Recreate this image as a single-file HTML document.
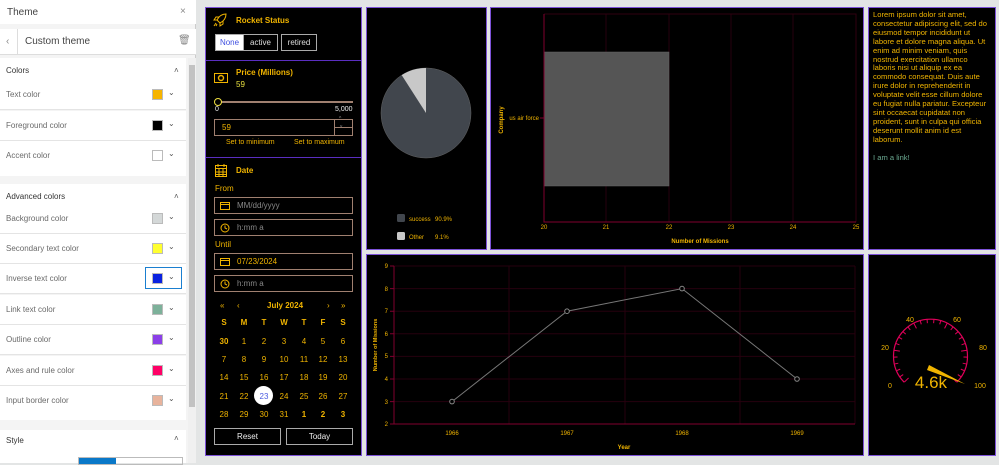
<!DOCTYPE html>
<html><head><style>
*{box-sizing:border-box;margin:0;padding:0}
body{width:999px;height:463px;overflow:hidden;background:#e3e5e5;font-family:"Liberation Sans",sans-serif;position:relative}
.a{position:absolute}
.side{left:0;top:0;width:196px;height:463px;background:#f4f4f4;border-right:1px solid #ccc}
.row{position:absolute;left:0;width:186px;height:30px;background:#fff;font-size:8px;color:#6a6a6a}
.row span{position:absolute;left:6px;top:10px}
.row i{position:absolute;left:152px;top:9px;width:11px;height:11px;border:1px solid #bbb}
.row b{position:absolute;left:168px;top:8px;font-weight:normal;font-size:8px;color:#555}
.row.l{border-bottom:1px solid #e4e4e4}
.p{position:absolute;background:#000;border:1px solid #7d52d8}
.t{font-size:8px;color:#f0b400;position:absolute}
.inp{position:absolute;left:214px;width:139px;height:17px;border:1px solid #a08070;font-size:8px;color:#888}
.cal{position:absolute;font-size:8px;color:#f0b400;width:14px;text-align:center}
</style></head><body>
<div class="a side">
 <div class="a" style="left:0;top:0;width:196px;height:24px;background:#fff;font-size:10px;color:#444"><span class="a" style="left:7px;top:7px">Theme</span><span class="a" style="left:180px;top:6px;color:#888">×</span></div>
 <div class="a" style="left:0;top:29px;width:196px;height:26px;background:#fff;font-size:10px;color:#444;border-bottom:1px solid #ddd"><span class="a" style="left:6px;top:7px;color:#888">‹</span><div class="a" style="left:17px;top:0;width:1px;height:26px;background:#ddd"></div><span class="a" style="left:25px;top:7px">Custom theme</span><span class="a" style="left:178px;top:6px;color:#888">🗑</span></div>
 <div class="a" style="left:188px;top:58px;width:8px;height:405px;background:#f0f0f0"></div>
 <div class="a" style="left:189px;top:65px;width:6px;height:342px;background:#c2c2c2"></div>
 <div class="row" style="top:58px;height:24px"><span style="top:8px;color:#333">Colors</span><b style="left:174px">˄</b></div>
 <div class="row l" style="top:80px"><span>Text color</span><i style="background:#f6b400"></i><b>⌄</b></div>
 <div class="row l" style="top:111px"><span>Foreground color</span><i style="background:#000"></i><b>⌄</b></div>
 <div class="row" style="top:141px;height:35px"><span>Accent color</span><i style="background:#fff"></i><b>⌄</b></div>
 <div class="row" style="top:184px;height:22px"><span style="top:8px;color:#333">Advanced colors</span><b style="left:174px">˄</b></div>
 <div class="row l" style="top:204px"><span>Background color</span><i style="background:#d4d8d8"></i><b>⌄</b></div>
 <div class="row l" style="top:234px"><span>Secondary text color</span><i style="background:#ffff30"></i><b>⌄</b></div>
 <div class="row l" style="top:264px"><span>Inverse text color</span><div class="a" style="left:145px;top:3px;width:37px;height:22px;border:1px solid #1a7fd0"></div><i style="background:#0a22e0"></i><b>⌄</b></div>
 <div class="row l" style="top:295px"><span>Link text color</span><i style="background:#7db19a"></i><b>⌄</b></div>
 <div class="row l" style="top:325px"><span>Outline color</span><i style="background:#8b3fe8"></i><b>⌄</b></div>
 <div class="row l" style="top:356px"><span>Axes and rule color</span><i style="background:#ff0066"></i><b>⌄</b></div>
 <div class="row" style="top:386px;height:34px"><span>Input border color</span><i style="background:#e8b39c"></i><b>⌄</b></div>
 <div class="row" style="top:430px;height:33px"><span style="top:6px;color:#333">Style</span><b style="left:174px;top:4px">˄</b>
  <div class="a" style="left:78px;top:27px;width:105px;height:8px;border:1px solid #bbb"></div><div class="a" style="left:79px;top:28px;width:37px;height:6px;background:#0a78c8"></div></div>
</div>

<div class="p" style="left:205px;top:7px;width:157px;height:449px"></div>
<svg class="a" style="left:213px;top:13px" width="14" height="14" viewBox="0 0 14 14" fill="none" stroke="#f0b400" stroke-width="1"><path d="M13 1C9 1 6 3 4 7l3 3c4-2 6-5 6-9zM4 7L1 7l2-3h3M7 10v3l3-2V8M3 10l-2 3M4 11l-1 2"/></svg>
<div class="t" style="left:236px;top:16px;font-weight:bold">Rocket Status</div>
<div class="a" style="left:215px;top:34px;width:29px;height:17px;background:#fff;border:1px solid #aaa;font-size:8px;color:#4050e0;text-align:center;line-height:15px">None</div>
<div class="a" style="left:243px;top:34px;width:35px;height:17px;border:1px solid #aaa;font-size:8px;color:#ddd;text-align:center;line-height:15px">active</div>
<div class="a" style="left:281px;top:34px;width:36px;height:17px;border:1px solid #aaa;font-size:8px;color:#ddd;text-align:center;line-height:15px">retired</div>
<div class="a" style="left:206px;top:60px;width:155px;height:1px;background:#5a2ec0"></div>
<svg class="a" style="left:214px;top:73px" width="14" height="10"><rect x="0.5" y="0.5" width="13" height="9" fill="none" stroke="#f0b400"/><circle cx="7" cy="5" r="2.5" fill="none" stroke="#f0b400" stroke-width="1.4"/></svg>
<div class="t" style="left:236px;top:68px;font-weight:bold">Price (Millions)</div>
<div class="t" style="left:236px;top:80px;color:#e8e040">59</div>
<div class="a" style="left:218px;top:101px;width:135px;height:2px;background:#a08070"></div>
<div class="a" style="left:214px;top:98px;width:8px;height:8px;border-radius:50%;border:1.5px solid #f0e040;background:#000"></div>
<div class="t" style="left:215px;top:106px;font-size:7px;color:#eee">0</div>
<div class="t" style="left:335px;top:106px;font-size:7px;color:#eee">5,000</div>
<div class="a" style="left:214px;top:119px;width:139px;height:17px;border:1px solid #a08070"></div>
<div class="a" style="left:334px;top:119px;width:1px;height:17px;background:#a08070"></div>
<div class="a" style="left:334px;top:127px;width:19px;height:1px;background:#a08070"></div>
<div class="t" style="left:222px;top:123px;font-size:8px">59</div>
<div class="t" style="left:339px;top:117px;font-size:7px;color:#ccc">ˆ</div><div class="t" style="left:340px;top:126px;font-size:7px;color:#ccc">ˇ</div>
<div class="t" style="left:226px;top:139px;font-size:7px">Set to minimum</div>
<div class="t" style="left:294px;top:139px;font-size:7px">Set to maximum</div>
<div class="a" style="left:206px;top:157px;width:155px;height:1px;background:#5a2ec0"></div>
<svg class="a" style="left:215px;top:164px" width="12" height="13" fill="none" stroke="#f0b400"><rect x="0.5" y="1.5" width="11" height="11"/><path d="M0 4.5h12M3 0v3M9 0v3M4 4v9M8 4v9M0 8h12M0 10.5h12"/></svg>
<div class="t" style="left:236px;top:166px;font-weight:bold">Date</div>
<div class="t" style="left:215px;top:184px">From</div>
<div class="inp" style="top:197px"><svg class="a" style="left:5px;top:4px" width="10" height="8" fill="none" stroke="#f0b400"><rect x=".5" y=".5" width="9" height="7"/><path d="M0 2.5h10"/></svg><span class="a" style="left:22px;top:3px">MM/dd/yyyy</span></div>
<div class="inp" style="top:219px"><svg class="a" style="left:5px;top:3px" width="10" height="10" fill="none" stroke="#f0b400"><circle cx="5" cy="5" r="4"/><path d="M5 2.5V5l2 1"/></svg><span class="a" style="left:22px;top:3px">h:mm a</span></div>
<div class="t" style="left:215px;top:240px">Until</div>
<div class="inp" style="top:253px"><svg class="a" style="left:5px;top:4px" width="10" height="8" fill="none" stroke="#f0b400"><rect x=".5" y=".5" width="9" height="7"/><path d="M0 2.5h10"/></svg><span class="a" style="left:22px;top:3px;color:#f0b400">07/23/2024</span></div>
<div class="inp" style="top:275px"><svg class="a" style="left:5px;top:3px" width="10" height="10" fill="none" stroke="#f0b400"><circle cx="5" cy="5" r="4"/><path d="M5 2.5V5l2 1"/></svg><span class="a" style="left:22px;top:3px">h:mm a</span></div>
<div class="t" style="left:220px;top:301px">«</div><div class="t" style="left:237px;top:301px">‹</div>
<div class="t" style="left:267px;top:301px;font-weight:bold">July 2024</div>
<div class="t" style="left:327px;top:301px">›</div><div class="t" style="left:341px;top:301px">»</div>
<div class="a" style="left:254px;top:386px;width:19px;height:19px;border-radius:50%;background:#fff"></div>
<div id="cal"></div>
<div class="a" style="left:214px;top:428px;width:67px;height:17px;border:1px solid #aaa;font-size:8px;color:#eee;text-align:center;line-height:15px">Reset</div>
<div class="a" style="left:286px;top:428px;width:67px;height:17px;border:1px solid #aaa;font-size:8px;color:#eee;text-align:center;line-height:15px">Today</div>

<div class="p" style="left:366px;top:7px;width:121px;height:243px"></div>
<svg class="a" style="left:366px;top:7px" width="121" height="243">
<circle cx="60" cy="106" r="45" fill="#41464d" stroke="#666" stroke-width=".5"/>
<path d="M60 106V61A45 45 0 0 0 35.7 68.1Z" fill="#c8c8c8"/>
<rect x="31" y="207" width="8" height="8" rx="1.5" fill="#41464d"/><rect x="31" y="225" width="8" height="8" rx="1.5" fill="#c8c8c8"/>
<text x="43" y="214" font-size="6" fill="#f0b400" font-family="Liberation Sans">success</text><text x="69" y="214" font-size="6" fill="#f0b400" font-family="Liberation Sans">90.9%</text>
<text x="43" y="232" font-size="6" fill="#f0b400" font-family="Liberation Sans">Other</text><text x="69" y="232" font-size="6" fill="#f0b400" font-family="Liberation Sans">9.1%</text>
</svg>

<div class="p" style="left:490px;top:7px;width:374px;height:243px"></div>
<svg class="a" style="left:490px;top:7px" width="374" height="243" font-family="Liberation Sans" font-size="6" fill="#f0b400">
<g stroke="#26000e"><path d="M116 7v208M179 7v208M241 7v208M303 7v208"/></g>
<path d="M54 7h312v208" fill="none" stroke="#30000f"/>
<rect x="54" y="45" width="125" height="134" fill="#555" stroke="#666" stroke-width=".5"/>
<path d="M54 7v208h312M50 111h4" fill="none" stroke="#80002e"/>
<text x="54" y="222" text-anchor="middle">20</text><text x="116" y="222" text-anchor="middle">21</text><text x="179" y="222" text-anchor="middle">22</text><text x="241" y="222" text-anchor="middle">23</text><text x="303" y="222" text-anchor="middle">24</text><text x="366" y="222" text-anchor="middle">25</text>
<text x="49" y="113" text-anchor="end">us air force</text>
<text x="210" y="236" text-anchor="middle" font-weight="bold">Number of Missions</text>
<text transform="translate(13 113) rotate(-90)" text-anchor="middle" font-weight="bold">Company</text>
</svg>

<div class="p" style="left:868px;top:7px;width:128px;height:243px;padding:3px 3px 3px 4px;font-size:7.6px;line-height:8.9px;color:#f0b400">Lorem ipsum dolor sit amet, consectetur adipiscing elit, sed do eiusmod tempor incididunt ut labore et dolore magna aliqua. Ut enim ad minim veniam, quis nostrud exercitation ullamco laboris nisi ut aliquip ex ea commodo consequat. Duis aute irure dolor in reprehenderit in voluptate velit esse cillum dolore eu fugiat nulla pariatur. Excepteur sint occaecat cupidatat non proident, sunt in culpa qui officia deserunt mollit anim id est laborum.<br><br><span style="color:#6aa890">I am a link!</span></div>

<div class="p" style="left:366px;top:254px;width:498px;height:202px"></div>
<svg class="a" style="left:366px;top:254px" width="498" height="202" font-family="Liberation Sans" font-size="6" fill="#f0b400">
<g stroke="#26000e"><path d="M28 12h461M28 34.6h461M28 57.2h461M28 79.8h461M28 102.4h461M28 125h461M28 147.6h461M143 12v158M259 12v158M374 12v158M489 12v158"/></g>
<path d="M28 12v158h461M24 12h4M24 34.6h4M24 57.2h4M24 79.8h4M24 102.4h4M24 125h4M24 147.6h4M24 170h4" fill="none" stroke="#80002e"/>
<polyline points="86,147.6 201,57.2 316,34.6 431,125" fill="none" stroke="#777"/>
<g fill="#000" stroke="#888"><circle cx="86" cy="147.6" r="2.3"/><circle cx="201" cy="57.2" r="2.3"/><circle cx="316" cy="34.6" r="2.3"/><circle cx="431" cy="125" r="2.3"/></g>
<g text-anchor="end"><text x="22" y="14">9</text><text x="22" y="37">8</text><text x="22" y="59">7</text><text x="22" y="82">6</text><text x="22" y="104">5</text><text x="22" y="127">4</text><text x="22" y="150">3</text><text x="22" y="172">2</text></g>
<g text-anchor="middle"><text x="86" y="181">1966</text><text x="201" y="181">1967</text><text x="316" y="181">1968</text><text x="431" y="181">1969</text>
<text x="258" y="195" font-weight="bold">Year</text></g>
<text transform="translate(11 91) rotate(-90)" text-anchor="middle" font-weight="bold" font-size="5.5">Number of Missions</text>
</svg>

<div class="p" style="left:868px;top:254px;width:128px;height:202px"></div>
<svg class="a" style="left:868px;top:254px" width="128" height="202" font-family="Liberation Sans" fill="#f0b400">
<g id="g"></g>
<path d="M36.2 128.2A37 37 0 1 1 88.8 128.2" fill="none" stroke="#e0005a" stroke-width="1.2"/>
<polygon points="61,111 97,130 59,116" fill="#f0b400"/>
<text x="63" y="134" font-size="17" text-anchor="middle">4.6k</text>
<g font-size="7" text-anchor="middle"><text x="22" y="134">0</text><text x="17" y="96">20</text><text x="42" y="68">40</text><text x="89" y="68">60</text><text x="115" y="96">80</text><text x="112" y="134">100</text></g>
</svg>
<script>
var c=document.getElementById('cal'),h='';
var days=['S','M','T','W','T','F','S'],xs=[224,244,264,284,304,323,343];
days.forEach(function(d,i){h+='<div class="cal" style="left:'+(xs[i]-7)+'px;top:318px;font-weight:bold">'+d+'</div>'});
var nums=[30].concat([...Array(31)].map((_,i)=>i+1)).concat([1,2,3]);
var ys=[337,355,373,392,410];
nums.forEach(function(n,i){var r=Math.floor(i/7),k=i%7;var st='';if(n==23&&r==3)st='color:#4a5ae0;';if((i==0)||i>=32)st+='font-weight:bold;';h+='<div class="cal" style="left:'+(xs[k]-7)+'px;top:'+ys[r]+'px;'+st+'">'+n+'</div>'});
c.innerHTML=h;
var g='',cx=62.5,cy=102;
for(var i=0;i<=25;i++){var a=(225-i*270/25)*Math.PI/180,r1=37,r2=i%5==0?31:33;
g+='<line x1="'+(cx+r1*Math.cos(a))+'" y1="'+(cy-r1*Math.sin(a))+'" x2="'+(cx+r2*Math.cos(a))+'" y2="'+(cy-r2*Math.sin(a))+'" stroke="#e0005a" stroke-width="1"/>'}
document.getElementById('g').innerHTML=g;
</script>
</body></html>
